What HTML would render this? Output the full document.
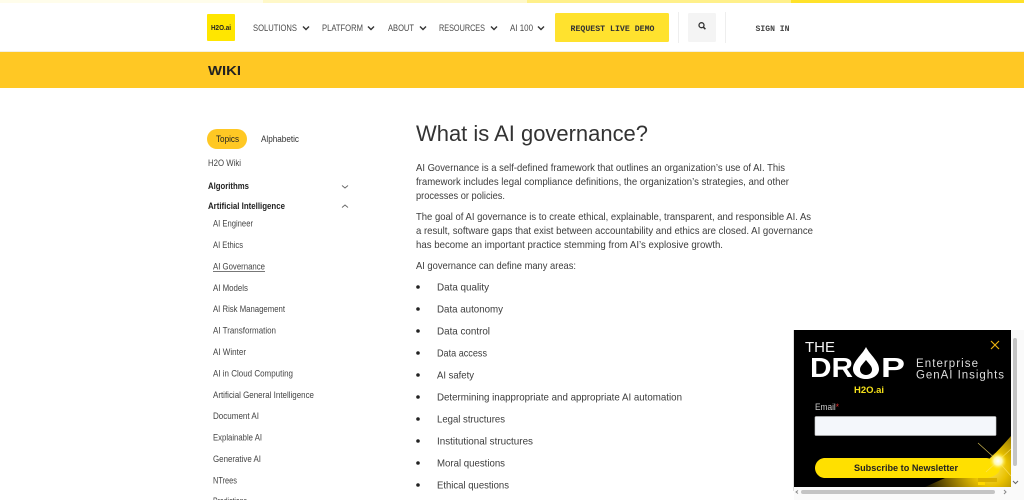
<!DOCTYPE html>
<html><head><meta charset="utf-8">
<style>
html,body{margin:0;padding:0;background:#fff;width:1024px;height:500px;overflow:hidden}
svg{display:block}
text{font-family:"Liberation Sans",sans-serif;font-size:9.5px;fill:#333}
.n{font-size:9px;fill:#4a4a4a}
.m{font-family:"Liberation Mono",monospace;font-size:8.5px}
.s{font-size:9px;fill:#444}
.b{font-size:9px;font-weight:bold;fill:#222}
.p{font-size:10.4px;fill:#3c3c3c}
.ch{fill:none;stroke:#333;stroke-width:1.4}
.cg{fill:none;stroke:#666;stroke-width:.9}
</style></head><body>
<svg width="1024" height="500" viewBox="0 0 1024 500" xmlns="http://www.w3.org/2000/svg">
<defs>
<radialGradient id="g" cx="990" cy="468" r="72" gradientUnits="userSpaceOnUse">
<stop offset="0" stop-color="#ffe860"/><stop offset=".25" stop-color="#e8c000"/><stop offset=".6" stop-color="#806600"/><stop offset="1" stop-color="#000"/>
</radialGradient>
<radialGradient id="w" cx="998" cy="461" r="9" gradientUnits="userSpaceOnUse">
<stop offset="0" stop-color="#fff"/><stop offset=".45" stop-color="#fff9b0"/><stop offset="1" stop-color="#ffe000" stop-opacity="0"/>
</radialGradient>
</defs>
<rect width="1024" height="500" fill="#fff"/>
<!-- top strip -->
<rect x="0" y="0" width="263" height="3" fill="#fffdeb"/>
<rect x="263" y="0" width="264" height="3" fill="#fff8c8"/>
<rect x="527" y="0" width="264" height="3" fill="#fff08a"/>
<rect x="791" y="0" width="233" height="3" fill="#ffe22a"/>
<!-- nav -->
<rect x="207" y="14" width="28" height="27" rx="1" fill="#ffe600"/>
<text x="211" y="30" style="font-size:7px;font-weight:bold;fill:#222" textLength="20" lengthAdjust="spacingAndGlyphs">H2O.ai</text>
<text class="n" x="253" y="31" textLength="44" lengthAdjust="spacingAndGlyphs">SOLUTIONS</text>
<path class="ch" d="M303 26.5l3 3 3-3"/>
<text class="n" x="322" y="31" textLength="41" lengthAdjust="spacingAndGlyphs">PLATFORM</text>
<path class="ch" d="M368 26.500l3 3 3-3"/>
<text class="n" x="388" y="31" textLength="26" lengthAdjust="spacingAndGlyphs">ABOUT</text>
<path class="ch" d="M420 26.500l3 3 3-3"/>
<text class="n" x="439" y="31" textLength="46" lengthAdjust="spacingAndGlyphs">RESOURCES</text>
<path class="ch" d="M491 26.500l3 3 3-3"/>
<text class="n" x="510" y="31" textLength="23" lengthAdjust="spacingAndGlyphs">AI 100</text>
<path class="ch" d="M538 26.500l3 3 3-3"/>
<rect x="555" y="13" width="114" height="29" rx="1.5" fill="#ffe22e"/>
<text class="m" x="570.500" y="31" style="font-weight:bold;fill:#333" textLength="84" lengthAdjust="spacingAndGlyphs">REQUEST LIVE DEMO</text>
<rect x="678" y="12" width="1" height="31" fill="#eee"/>
<rect x="688" y="13" width="28" height="29" rx="1.5" fill="#f4f4f4"/>
<circle cx="701.500" cy="25.200" r="2.500" fill="none" stroke="#333" stroke-width="1.3"/>
<path d="M703.400 27.200l2 2" stroke="#333" stroke-width="1.500"/>
<rect x="725" y="12" width="1" height="31" fill="#eee"/>
<text class="m" x="755.500" y="31" style="fill:#444;font-weight:bold" textLength="34" lengthAdjust="spacingAndGlyphs">SIGN IN</text>
<rect x="0" y="51" width="1024" height="1" fill="#f3f0e4"/>
<!-- wiki band -->
<rect x="0" y="52" width="1024" height="36" fill="#ffc824"/>
<text x="208" y="75" style="font-size:13px;font-weight:bold;fill:#222" textLength="33" lengthAdjust="spacingAndGlyphs">WIKI</text>
<!-- sidebar -->
<rect x="207" y="129" width="40" height="20" rx="10" fill="#ffc824"/>
<text class="s" x="216" y="142" style="fill:#222" textLength="23" lengthAdjust="spacingAndGlyphs">Topics</text>
<text class="s" x="261" y="142" style="fill:#333" textLength="38" lengthAdjust="spacingAndGlyphs">Alphabetic</text>
<text class="s" x="208" y="166" textLength="33" lengthAdjust="spacingAndGlyphs">H2O Wiki</text>
<text class="b" x="208" y="189" textLength="41" lengthAdjust="spacingAndGlyphs">Algorithms</text>
<path class="cg" d="M342 185.500l3 2.500 3-2.500"/>
<text class="b" x="208" y="209" textLength="77" lengthAdjust="spacingAndGlyphs">Artificial Intelligence</text>
<path class="cg" d="M342 207.500l3-2.500 3 2.500"/>
<text class="s" x="213" y="226.500" textLength="40" lengthAdjust="spacingAndGlyphs">AI Engineer</text>
<text class="s" x="213" y="248" textLength="30" lengthAdjust="spacingAndGlyphs">AI Ethics</text>
<text class="s" x="213" y="269.500" textLength="52" lengthAdjust="spacingAndGlyphs">AI Governance</text>
<rect x="213" y="271" width="52" height="1" fill="#777"/>
<text class="s" x="213" y="291" textLength="35" lengthAdjust="spacingAndGlyphs">AI Models</text>
<text class="s" x="213" y="312" textLength="72" lengthAdjust="spacingAndGlyphs">AI Risk Management</text>
<text class="s" x="213" y="333.500" textLength="63" lengthAdjust="spacingAndGlyphs">AI Transformation</text>
<text class="s" x="213" y="355" textLength="33" lengthAdjust="spacingAndGlyphs">AI Winter</text>
<text class="s" x="213" y="376.500" textLength="80" lengthAdjust="spacingAndGlyphs">AI in Cloud Computing</text>
<text class="s" x="213" y="398" textLength="101" lengthAdjust="spacingAndGlyphs">Artificial General Intelligence</text>
<text class="s" x="213" y="419" textLength="46" lengthAdjust="spacingAndGlyphs">Document AI</text>
<text class="s" x="213" y="440.500" textLength="49" lengthAdjust="spacingAndGlyphs">Explainable AI</text>
<text class="s" x="213" y="462" textLength="48" lengthAdjust="spacingAndGlyphs">Generative AI</text>
<text class="s" x="213" y="483.500" textLength="24" lengthAdjust="spacingAndGlyphs">NTrees</text>
<text class="s" x="213" y="504" textLength="34" lengthAdjust="spacingAndGlyphs">Predictions</text>
<!-- main -->
<text x="416" y="141" style="font-size:22.500px;fill:#333" textLength="232" lengthAdjust="spacingAndGlyphs">What is AI governance?</text>
<text class="p" x="416" y="171" textLength="369" lengthAdjust="spacingAndGlyphs">AI Governance is a self-defined framework that outlines an organization’s use of AI. This</text>
<text class="p" x="416" y="185" textLength="373" lengthAdjust="spacingAndGlyphs">framework includes legal compliance definitions, the organization’s strategies, and other</text>
<text class="p" x="416" y="199" textLength="89" lengthAdjust="spacingAndGlyphs">processes or policies.</text>
<text class="p" x="416" y="220" textLength="395" lengthAdjust="spacingAndGlyphs">The goal of AI governance is to create ethical, explainable, transparent, and responsible AI. As</text>
<text class="p" x="416" y="234" textLength="397" lengthAdjust="spacingAndGlyphs">a result, software gaps that exist between accountability and ethics are closed. AI governance</text>
<text class="p" x="416" y="248" textLength="307" lengthAdjust="spacingAndGlyphs">has become an important practice stemming from AI’s explosive growth.</text>
<text class="p" x="416" y="269" textLength="160" lengthAdjust="spacingAndGlyphs">AI governance can define many areas:</text>
<g fill="#222">
<circle cx="418" cy="287" r="1.800"/><circle cx="418" cy="309" r="1.800"/><circle cx="418" cy="331" r="1.800"/><circle cx="418" cy="353" r="1.800"/><circle cx="418" cy="375" r="1.800"/><circle cx="418" cy="397" r="1.800"/><circle cx="418" cy="419" r="1.800"/><circle cx="418" cy="441" r="1.800"/><circle cx="418" cy="463" r="1.800"/><circle cx="418" cy="485" r="1.800"/>
</g>
<text class="p" x="437" y="290.500" textLength="52" lengthAdjust="spacingAndGlyphs">Data quality</text>
<text class="p" x="437" y="312.500" textLength="66" lengthAdjust="spacingAndGlyphs">Data autonomy</text>
<text class="p" x="437" y="334.500" textLength="53" lengthAdjust="spacingAndGlyphs">Data control</text>
<text class="p" x="437" y="356.500" textLength="50" lengthAdjust="spacingAndGlyphs">Data access</text>
<text class="p" x="437" y="378.500" textLength="37" lengthAdjust="spacingAndGlyphs">AI safety</text>
<text class="p" x="437" y="400.500" textLength="245" lengthAdjust="spacingAndGlyphs">Determining inappropriate and appropriate AI automation</text>
<text class="p" x="437" y="422.500" textLength="68" lengthAdjust="spacingAndGlyphs">Legal structures</text>
<text class="p" x="437" y="444.500" textLength="96" lengthAdjust="spacingAndGlyphs">Institutional structures</text>
<text class="p" x="437" y="466.500" textLength="68" lengthAdjust="spacingAndGlyphs">Moral questions</text>
<text class="p" x="437" y="488.500" textLength="72" lengthAdjust="spacingAndGlyphs">Ethical questions</text>
<!-- popup -->
<rect x="793" y="330" width="231" height="170" fill="#fff"/>
<rect x="793.500" y="330" width="1" height="161" fill="#bbb"/>
<rect x="794" y="330" width="217" height="157" fill="#000"/>
<path d="M1011 436L1011 487H925L945 478C975 476 990 460 1011 436Z" fill="url(#g)"/>
<text x="805" y="352" style="font-size:15px;fill:#f2f2f2" textLength="30" lengthAdjust="spacingAndGlyphs">THE</text>
<text x="810" y="377" style="font-size:28px;font-weight:bold;fill:#fff" textLength="43" lengthAdjust="spacingAndGlyphs">DR</text>
<path d="M866 347C870 355 879 361 879 369C879 375 873 379 866 379C859 379 853 375 853 369C853 361 862 355 866 347Z" fill="#fff"/>
<path d="M866 360C869 364 872 366 872 369.500C872 373 869 375 866 375C863 375 860 373 860 369.500C860 366 863 364 866 360Z" fill="#000"/>
<text x="881" y="377" style="font-size:28px;font-weight:bold;fill:#fff" textLength="24" lengthAdjust="spacingAndGlyphs">P</text>
<text x="854" y="393" style="font-size:9.500px;font-weight:bold;fill:#f5e11a" textLength="30" lengthAdjust="spacingAndGlyphs">H2O.ai</text>
<text x="916" y="367" style="font-size:11.500px;fill:#ddd" textLength="62" lengthAdjust="spacing">Enterprise</text>
<text x="916" y="378.500" style="font-size:11.500px;fill:#ddd" textLength="88" lengthAdjust="spacing">GenAI Insights</text>
<path d="M991 341l8 8M999 341l-8 8" stroke="#e8b010" stroke-width="1.200" fill="none"/>
<text x="815" y="410" style="font-size:9.500px;fill:#ccc" textLength="24" lengthAdjust="spacingAndGlyphs">Email<tspan fill="#e03030">*</tspan></text>
<rect x="815" y="416.500" width="181" height="19" rx="1" fill="#f4f7fb" stroke="#ccc" stroke-width=".6"/>
<path d="M825 458H985C992 458 1000 462 1000 468C1000 474 992 478 985 478H825C819 478 815 473 815 468C815 463 819 458 825 458Z" fill="#ffe000"/>
<rect x="978" y="478" width="19" height="4" fill="#d8b000"/><rect x="978" y="482" width="7" height="3" fill="#ffd800"/>
<text x="854" y="471" style="font-size:9.500px;font-weight:bold;fill:#222" textLength="104" lengthAdjust="spacingAndGlyphs">Subscribe to Newsletter</text>
<path d="M978 443L998 461M998 461L1011 449M998 461L986 472M998 461L1011 476" stroke="#ffe566" stroke-width=".7" opacity=".8"/>
<circle cx="998" cy="461" r="9" fill="url(#w)"/>
<!-- popup scrollbars -->
<rect x="1011" y="330" width="13" height="170" fill="#fafafa"/>
<rect x="1013" y="338" width="4" height="128" rx="2" fill="#c4c4c4"/>
<path d="M1013 481l2.500 2.500 2.500-2.500" fill="none" stroke="#666" stroke-width="1"/>
<rect x="794" y="487" width="217" height="13" fill="#fafafa"/>
<rect x="801" y="490" width="194" height="4" rx="2" fill="#c4c4c4"/>
<path d="M798 490.500l-2 1.500 2 1.500M1004 490l2 2-2 2" fill="none" stroke="#888" stroke-width="1"/>
</svg>
</body></html>
